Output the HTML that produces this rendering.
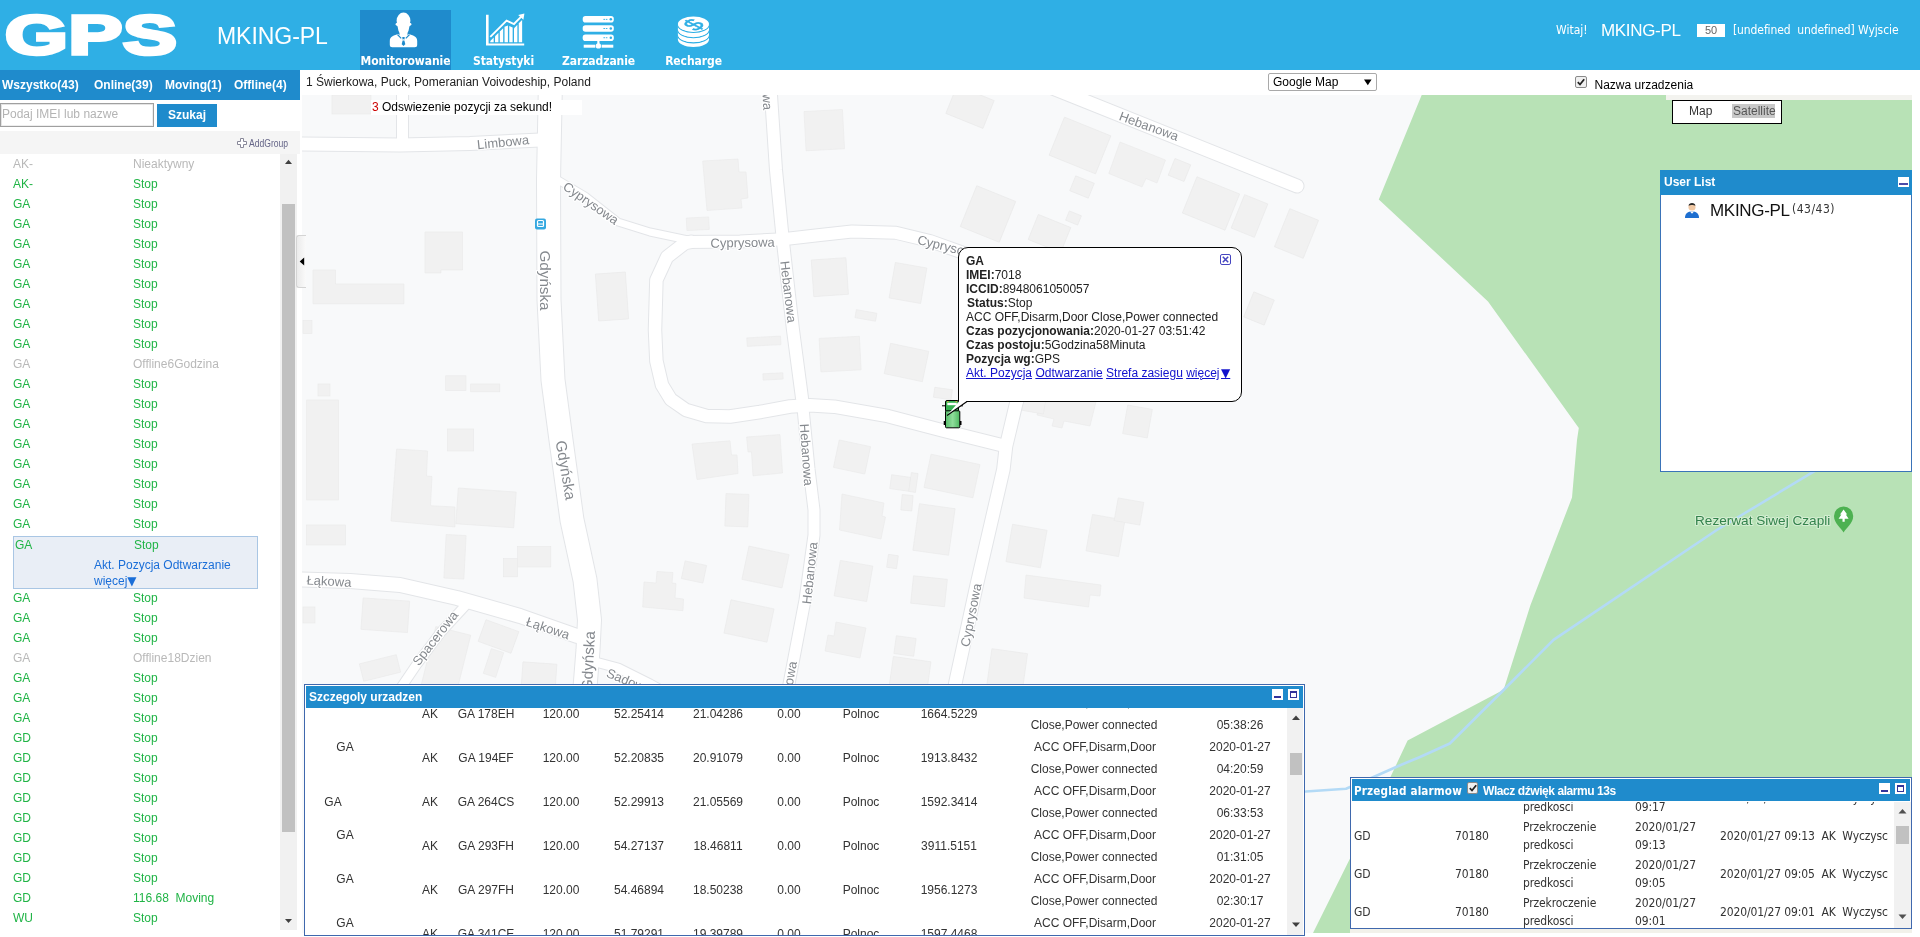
<!DOCTYPE html><html><head><meta charset="utf-8"><title>GPS</title><style>
*{box-sizing:border-box;margin:0;padding:0}
html,body{width:1920px;height:937px;overflow:hidden;background:#fff}
body{font-family:"Liberation Sans",sans-serif;font-size:12px;color:#000;position:relative}
.abs{position:absolute}
.t{position:absolute;white-space:nowrap;line-height:1}
.tah{font-family:"DejaVu Sans Condensed","Liberation Sans",sans-serif}
#hdr{position:absolute;left:0;top:0;width:1920px;height:70px;background:#2fafe5}
#gps{position:absolute;left:5px;top:3px;font-weight:bold;font-size:56px;line-height:64px;color:#fff;transform-origin:0 0;transform:scaleX(1.44);letter-spacing:0.5px;white-space:nowrap;-webkit-text-stroke:3.5px #fff}
.nav{position:absolute;top:10px;height:60px;color:#fff;font-weight:bold;font-size:12px;font-family:"DejaVu Sans Condensed","Liberation Sans",sans-serif;letter-spacing:-0.08px}
.nav span{position:absolute;left:0;right:0;top:44px;text-align:center;line-height:15px;white-space:nowrap}
#ltabs{position:absolute;left:0;top:70px;width:300px;height:30px;background:#1f8bcc}
#ltabs span{position:absolute;top:8px;color:#fff;font-weight:bold;font-size:12px;line-height:14px;white-space:nowrap}
.row{position:absolute;left:0;width:280px;height:20px;line-height:20px;font-size:12px;color:#20b446;white-space:nowrap}
.row b{font-weight:normal;position:absolute;left:13px}
.row i{font-style:normal;position:absolute;left:133px}
.row.off{color:#b9b9b9}
.pt{position:absolute;background:#1f8bcc;color:#fff;font-weight:bold;font-size:12px;white-space:nowrap}
.cell{position:absolute;white-space:nowrap;text-align:center;color:#333;font-size:12px;line-height:14px;transform:translateX(-50%)}
.ac{position:absolute;white-space:nowrap;color:#333;font-size:12px;line-height:14px}
</style></head><body><div id="app" style="position:absolute;left:0;top:0;width:1920px;height:937px;will-change:transform">
<svg class="abs" style="left:302px;top:95px" width="1610" height="838" viewBox="302 95 1610 838" font-family="Liberation Sans, sans-serif">
<rect x="302" y="95" width="1610" height="838" fill="#f8f9fa"/>
<polygon points="1421.700,95 1378.800,199.400 1488,301.400 1578.800,428 1577,440 1572,497.600 1530.500,605 1503.600,689.700 1407.600,740.400 1390,778 1313,933 1912,933 1912,95" fill="#b8e2b6"/>
<rect x="1666" y="95" width="246" height="5" fill="#f3f3ef"/><rect x="1350" y="929" width="562" height="4" fill="#f2f1ea"/>
<polyline points="1912,415 1812,472.600 1716.800,530 1553.500,639.800 1503.600,690 1449.800,743.500 1420,757 1400.700,765 1374.700,776.500 1346,788.800 1305.800,791.500 1250,793" fill="none" stroke="#b3daf6" stroke-width="2.6" stroke-linejoin="round"/>
<g fill="#f1f1f1" stroke="#e9e9e9" stroke-width="0.6"><rect x="332" y="95" width="39" height="19"/><polygon points="425,232 462.5,232 462.5,270 441,270 441,273 425,273"/><polygon points="313,270 335.5,270 335.5,284 404,284 404,303.7 313,303.7"/><rect x="303" y="320.5" width="9" height="13"/><rect x="445.7" y="375.8" width="20.3" height="14.9"/><rect x="470.7" y="384" width="29.1" height="7.8"/><rect x="318" y="384" width="12" height="12"/><rect x="306.7" y="400" width="31.8" height="100"/><rect x="447.5" y="429" width="26.2" height="22"/><rect x="597" y="273" width="30" height="47" transform="rotate(-4 612 296.5)"/><polygon points="702.7,161 738,159 739,172 746,172 748,198 741,199 742,208 707,210.5"/><rect x="686.6" y="217.5" width="22.4" height="12.5" transform="rotate(-3 697.8 223.75)"/><rect x="805" y="110.5" width="38.5" height="39.3" transform="rotate(-3 824.25 130.15)"/><rect x="812.5" y="258.8" width="34.7" height="36.7" transform="rotate(-4 829.85 277.15)"/><rect x="892" y="265" width="32" height="36" transform="rotate(10 908 283)"/><rect x="855.5" y="311.4" width="20.9" height="8.1" transform="rotate(10 865.95 315.45)"/><rect x="747" y="337" width="33.8" height="8.5" transform="rotate(-3 763.9 341.25)"/><rect x="763" y="373.3" width="20" height="6.3" transform="rotate(-3 773 376.45)"/><rect x="820" y="337.3" width="40.3" height="33.6" transform="rotate(-3 840.15 354.1)"/><rect x="887" y="347" width="39" height="31" transform="rotate(12 906.5 362.5)"/><rect x="934" y="388.5" width="17.8" height="10" transform="rotate(8 942.9 393.5)"/><rect x="950" y="92" width="40" height="30" transform="rotate(22 970 107)"/><polygon points="396.6,449 427.6,451 426.5,476 432,476.5 430.5,505.7 455,507 455,527 391,521"/><rect x="457" y="490" width="58" height="35.8" transform="rotate(4 486 507.9)"/><rect x="306.5" y="525" width="39.1" height="20"/><rect x="445" y="535" width="20" height="43.6" transform="rotate(3 455 556.8)"/><rect x="517.6" y="546.5" width="33.2" height="20.5"/><rect x="503.4" y="558.6" width="14.2" height="18.2"/><rect x="362" y="599.5" width="46.6" height="31.5" transform="rotate(4 385.3 615.25)"/><rect x="303" y="607" width="12" height="16"/><rect x="361" y="659" width="38" height="18" transform="rotate(-14 380 668)"/><rect x="428" y="630" width="36" height="60" transform="rotate(14 446 660)"/><rect x="481" y="625" width="35" height="23" transform="rotate(20 498.5 636.5)"/><rect x="487" y="650" width="13" height="26" transform="rotate(18 493.5 663)"/><rect x="522" y="663" width="34" height="27" transform="rotate(4 539 676.5)"/><polygon points="692,444 730,440.8 731.5,455 737,455 738,473.5 697,479.5"/><polygon points="746.6,437 780,434.6 782.5,473 753,475.8 751.5,452 748,452"/><rect x="725.4" y="494" width="23" height="32.5" transform="rotate(2 736.9 510.25)"/><rect x="745" y="550" width="41" height="34" transform="rotate(12 765.5 567)"/><rect x="683" y="563" width="22" height="18" transform="rotate(12 694 572)"/><polygon points="657,571.5 673,572.5 672,583 676,583.5 675,598 683.5,599 683,610.7 642.7,607 644,582 656,583"/><rect x="727" y="604" width="44" height="34" transform="rotate(12 749 621)"/><rect x="836" y="443" width="32" height="28" transform="rotate(12 852 457)"/><polygon points="842,494 884,503 882,516 885.5,517 881,539 839.5,530"/><rect x="890.6" y="476" width="19.4" height="14" transform="rotate(8 900.3 483)"/><rect x="910" y="473" width="6.8" height="19" transform="rotate(8 913.4 482.5)"/><rect x="901.5" y="495" width="11" height="15.5" transform="rotate(5 907 502.75)"/><rect x="927" y="459" width="50" height="34" transform="rotate(12 952 476)"/><rect x="916" y="506" width="36" height="47" transform="rotate(8 934 529.5)"/><rect x="837" y="563" width="33" height="36" transform="rotate(10 853.5 581)"/><rect x="887.5" y="555" width="10" height="13" transform="rotate(8 892.5 561.5)"/><rect x="912" y="577.5" width="34" height="27.5" transform="rotate(6 929 591.25)"/><polygon points="836,622 866,628 860,658 825,651 828,635 834,636"/><rect x="895" y="637" width="20" height="18" transform="rotate(8 905 646)"/><rect x="891" y="659" width="38" height="31" transform="rotate(8 910 674.5)"/><rect x="989" y="651" width="36" height="39" transform="rotate(8 1007 670.5)"/><rect x="1055" y="125" width="50" height="41" transform="rotate(22 1080 145.5)"/><polygon points="1120,142 1165.5,160 1157,183 1146,178.5 1142,187 1108.8,173.5"/><rect x="1171" y="161" width="17" height="18" transform="rotate(22 1179.5 170)"/><rect x="1072" y="179" width="20" height="16" transform="rotate(22 1082 187)"/><rect x="1188" y="184" width="46" height="39" transform="rotate(22 1211 203.5)"/><rect x="1237" y="198" width="25" height="36" transform="rotate(22 1249.5 216)"/><rect x="1281" y="213" width="31" height="41" transform="rotate(22 1296.5 233.5)"/><rect x="967" y="192" width="42" height="44" transform="rotate(22 988 214)"/><rect x="1032" y="220" width="35" height="27" transform="rotate(22 1049.5 233.5)"/><rect x="1067" y="213" width="13" height="10" transform="rotate(22 1073.5 218)"/><rect x="1248" y="295" width="22" height="27" transform="rotate(22 1259 308.5)"/><polygon points="1040,402 1096,402 1090,426 1064,421 1062,428 1052,426 1054,419 1037,415"/><rect x="1125" y="407" width="25" height="29" transform="rotate(10 1137.5 421.5)"/><rect x="1009" y="527" width="35" height="38" transform="rotate(10 1026.5 546)"/><rect x="1089" y="517" width="33" height="37" transform="rotate(10 1105.5 535.5)"/><rect x="1116" y="500" width="26" height="23" transform="rotate(10 1129 511.5)"/><polygon points="1026,575 1101,585 1100,596 1090,595 1088.5,607 1024,598"/><rect x="1020" y="395" width="25" height="17" transform="rotate(10 1032.5 403.5)"/></g>
<polyline points="550.5,80 548.5,180 549,300 553,380 561,440 572,520 585,580 589.5,620 588,650 584,700" fill="none" stroke="#e3e5e8" stroke-width="25" stroke-linecap="round" stroke-linejoin="round"/>
<polyline points="290,144 400,145 470,143.5 540,140" fill="none" stroke="#e3e5e8" stroke-width="15" stroke-linecap="round" stroke-linejoin="round"/>
<polyline points="402.5,80 402.5,143" fill="none" stroke="#e3e5e8" stroke-width="13" stroke-linecap="round" stroke-linejoin="round"/>
<polyline points="558,180 585,196 618,222 650,232 688,240" fill="none" stroke="#e3e5e8" stroke-width="9" stroke-linecap="round" stroke-linejoin="round"/>
<polyline points="686,242 740,241.5 783,239.2 820,235 852,231.5 896,232.8 930,241 957,250.7 1000,266" fill="none" stroke="#e3e5e8" stroke-width="14" stroke-linecap="round" stroke-linejoin="round"/>
<polyline points="691,241.8 685,243 667,257 656.4,280 655,330 656.4,361 662,385 670.7,399.3 686,410 706.6,416 730,416.5 760,412 790,406.5 809.8,405.3 834.2,406.7 888.3,416.2 943.8,430.8 1003,445.5" fill="none" stroke="#e3e5e8" stroke-width="14.5" stroke-linecap="round" stroke-linejoin="round"/>
<polyline points="770,80 776,170 783.4,245.6 793,330 802,398" fill="none" stroke="#e3e5e8" stroke-width="14" stroke-linecap="round" stroke-linejoin="round"/>
<polyline points="802,398 809,469 814,510 814,535 805,600 789,684 786,700" fill="none" stroke="#e3e5e8" stroke-width="13" stroke-linecap="round" stroke-linejoin="round"/>
<polyline points="1030,360 1016.3,403 1006,446.4 1003.4,469.4 976.5,585.8 956.3,678.6 951,705" fill="none" stroke="#e3e5e8" stroke-width="14.5" stroke-linecap="round" stroke-linejoin="round"/>
<polyline points="1045,85 1070,95 1297,186" fill="none" stroke="#e3e5e8" stroke-width="15" stroke-linecap="round" stroke-linejoin="round"/>
<polyline points="290,579 350,581 400,585 457,598 520,616 577,636" fill="none" stroke="#e3e5e8" stroke-width="16" stroke-linecap="round" stroke-linejoin="round"/>
<polyline points="465,606 441,632 417,664 398,692" fill="none" stroke="#e3e5e8" stroke-width="11" stroke-linecap="round" stroke-linejoin="round"/>
<polyline points="588,660 618,668 650,684 670,695" fill="none" stroke="#e3e5e8" stroke-width="11" stroke-linecap="round" stroke-linejoin="round"/>
<polyline points="550.5,80 548.5,180 549,300 553,380 561,440 572,520 585,580 589.5,620 588,650 584,700" fill="none" stroke="#fff" stroke-width="23" stroke-linecap="round" stroke-linejoin="round"/>
<polyline points="290,144 400,145 470,143.5 540,140" fill="none" stroke="#fff" stroke-width="13" stroke-linecap="round" stroke-linejoin="round"/>
<polyline points="402.5,80 402.5,143" fill="none" stroke="#fff" stroke-width="11" stroke-linecap="round" stroke-linejoin="round"/>
<polyline points="558,180 585,196 618,222 650,232 688,240" fill="none" stroke="#fff" stroke-width="7" stroke-linecap="round" stroke-linejoin="round"/>
<polyline points="686,242 740,241.5 783,239.2 820,235 852,231.5 896,232.8 930,241 957,250.7 1000,266" fill="none" stroke="#fff" stroke-width="12" stroke-linecap="round" stroke-linejoin="round"/>
<polyline points="691,241.8 685,243 667,257 656.4,280 655,330 656.4,361 662,385 670.7,399.3 686,410 706.6,416 730,416.5 760,412 790,406.5 809.8,405.3 834.2,406.7 888.3,416.2 943.8,430.8 1003,445.5" fill="none" stroke="#fff" stroke-width="12.5" stroke-linecap="round" stroke-linejoin="round"/>
<polyline points="770,80 776,170 783.4,245.6 793,330 802,398" fill="none" stroke="#fff" stroke-width="12" stroke-linecap="round" stroke-linejoin="round"/>
<polyline points="802,398 809,469 814,510 814,535 805,600 789,684 786,700" fill="none" stroke="#fff" stroke-width="11" stroke-linecap="round" stroke-linejoin="round"/>
<polyline points="1030,360 1016.3,403 1006,446.4 1003.4,469.4 976.5,585.8 956.3,678.6 951,705" fill="none" stroke="#fff" stroke-width="12.5" stroke-linecap="round" stroke-linejoin="round"/>
<polyline points="1045,85 1070,95 1297,186" fill="none" stroke="#fff" stroke-width="13" stroke-linecap="round" stroke-linejoin="round"/>
<polyline points="290,579 350,581 400,585 457,598 520,616 577,636" fill="none" stroke="#fff" stroke-width="14" stroke-linecap="round" stroke-linejoin="round"/>
<polyline points="465,606 441,632 417,664 398,692" fill="none" stroke="#fff" stroke-width="9" stroke-linecap="round" stroke-linejoin="round"/>
<polyline points="588,660 618,668 650,684 670,695" fill="none" stroke="#fff" stroke-width="9" stroke-linecap="round" stroke-linejoin="round"/>
<text x="503" y="146.68" font-size="13" fill="#85898e" text-anchor="middle" transform="rotate(-6 503 142)" stroke="#fff" stroke-width="2.5" paint-order="stroke" stroke-linejoin="round">Limbowa</text>
<text x="591" y="207.68" font-size="13" fill="#85898e" text-anchor="middle" transform="rotate(35 591 203)" stroke="#fff" stroke-width="2.5" paint-order="stroke" stroke-linejoin="round">Cyprysowa</text>
<text x="742.6" y="247.08" font-size="13" fill="#85898e" text-anchor="middle" transform="rotate(-1 742.6 242.4)" stroke="#fff" stroke-width="2.5" paint-order="stroke" stroke-linejoin="round">Cyprysowa</text>
<text x="949" y="251.68" font-size="13" fill="#85898e" text-anchor="middle" transform="rotate(14 949 247)" stroke="#fff" stroke-width="2.5" paint-order="stroke" stroke-linejoin="round">Cyprysowa</text>
<text x="545.8" y="285.972" font-size="15.2" fill="#85898e" text-anchor="middle" transform="rotate(90 545.8 280.5)" stroke="#fff" stroke-width="2.5" paint-order="stroke" stroke-linejoin="round">Gdyńska</text>
<text x="788.6" y="296.38" font-size="13" fill="#85898e" text-anchor="middle" transform="rotate(83 788.6 291.7)" stroke="#fff" stroke-width="2.5" paint-order="stroke" stroke-linejoin="round">Hebanowa</text>
<text x="766.5" y="83.68" font-size="13" fill="#85898e" text-anchor="middle" transform="rotate(87 766.5 79)" stroke="#fff" stroke-width="2.5" paint-order="stroke" stroke-linejoin="round">Hebanowa</text>
<text x="1149" y="130.68" font-size="13" fill="#85898e" text-anchor="middle" transform="rotate(20 1149 126)" stroke="#fff" stroke-width="2.5" paint-order="stroke" stroke-linejoin="round">Hebanowa</text>
<text x="566" y="475.472" font-size="15.2" fill="#85898e" text-anchor="middle" transform="rotate(80 566 470)" stroke="#fff" stroke-width="2.5" paint-order="stroke" stroke-linejoin="round">Gdyńska</text>
<text x="806.7" y="459.38" font-size="13" fill="#85898e" text-anchor="middle" transform="rotate(86 806.7 454.7)" stroke="#fff" stroke-width="2.5" paint-order="stroke" stroke-linejoin="round">Hebanowa</text>
<text x="809.7" y="577.68" font-size="13" fill="#85898e" text-anchor="middle" transform="rotate(-84 809.7 573)" stroke="#fff" stroke-width="2.5" paint-order="stroke" stroke-linejoin="round">Hebanowa</text>
<text x="970.8" y="619.68" font-size="13" fill="#85898e" text-anchor="middle" transform="rotate(-79 970.8 615)" stroke="#fff" stroke-width="2.5" paint-order="stroke" stroke-linejoin="round">Cyprysowa</text>
<text x="329" y="585.68" font-size="13" fill="#85898e" text-anchor="middle" transform="rotate(3 329 581)" stroke="#fff" stroke-width="2.5" paint-order="stroke" stroke-linejoin="round">Łąkowa</text>
<text x="548" y="632.68" font-size="13" fill="#85898e" text-anchor="middle" transform="rotate(18 548 628)" stroke="#fff" stroke-width="2.5" paint-order="stroke" stroke-linejoin="round">Łąkowa</text>
<text x="435" y="642.68" font-size="13" fill="#85898e" text-anchor="middle" transform="rotate(-52 435 638)" stroke="#fff" stroke-width="2.5" paint-order="stroke" stroke-linejoin="round">Spacerowa</text>
<text x="588" y="666.472" font-size="15.2" fill="#85898e" text-anchor="middle" transform="rotate(-87 588 661)" stroke="#fff" stroke-width="2.5" paint-order="stroke" stroke-linejoin="round">Gdyńska</text>
<text x="629" y="685.68" font-size="13" fill="#85898e" text-anchor="middle" transform="rotate(22 629 681)" stroke="#fff" stroke-width="2.5" paint-order="stroke" stroke-linejoin="round">Sadowa</text>
<text x="787" y="696.68" font-size="13" fill="#85898e" text-anchor="middle" transform="rotate(-80 787 692)" stroke="#fff" stroke-width="2.5" paint-order="stroke" stroke-linejoin="round">Hebanowa</text>
<rect x="535" y="218.500" width="11" height="11" rx="2" fill="#35a8e0"/><rect x="537.500" y="220.500" width="6" height="6" rx="1" fill="none" stroke="#fff" stroke-width="1.2"/><rect x="538" y="223.500" width="5" height="1" fill="#fff"/>
<text x="1695" y="525" font-size="13.600" fill="#33824c" stroke="#d4eed2" stroke-width="2.200" paint-order="stroke" stroke-linejoin="round">Rezerwat Siwej Czapli</text>
<path d="M1843.600 532.600c-2.500-5-9.600-9-9.600-16.600a9.600 9.600 0 0 1 19.200 0c0 7.600-7.100 11.600-9.600 16.600z" fill="#4db151"/><path d="M1843.600 509.500l-3.600 5h1.400l-2.800 4.300h3.900v3h2.200v-3h3.900l-2.800-4.300h1.400z" fill="#fff"/>
<defs><linearGradient id="cg" x1="0" y1="0" x2="1" y2="0"><stop offset="0" stop-color="#55bd69"/><stop offset="0.5" stop-color="#8fdc9b"/><stop offset="1" stop-color="#4cb860"/></linearGradient></defs>
<g stroke="#000" stroke-width="1"><path d="M942 405.800h4M958.500 405.800h4.500" fill="none"/><rect x="943.700" y="421" width="2" height="4" fill="#000" stroke="none"/><rect x="959.500" y="421" width="2" height="4" fill="#000" stroke="none"/><rect x="945.500" y="400.500" width="13" height="11" rx="1.500" fill="#36b152"/><rect x="945.500" y="410.800" width="14.300" height="17" rx="1" fill="url(#cg)"/></g><rect x="947.300" y="402.800" width="9.500" height="2.400" fill="#fff"/><rect x="947" y="401.200" width="1.600" height="1" fill="#e8b040"/><rect x="955.500" y="401.200" width="1.600" height="1" fill="#e8b040"/>
</svg>
<div id="hdr">
<div id="gps">GPS</div>
<div class="t" style="left:217px;top:25px;font-size:23px;color:#fff;letter-spacing:-0.05px">MKING-PL</div>
<div class="nav" style="left:360px;width:91px;background:#1f8bcc"><span>Monitorowanie</span></div>
<div class="nav" style="left:458px;width:91px"><span>Statystyki</span></div>
<div class="nav" style="left:553px;width:91px"><span>Zarzadzanie</span></div>
<div class="nav" style="left:648px;width:91px"><span>Recharge</span></div>
<svg class="abs" style="left:360px;top:0" width="380" height="70" viewBox="360 0 380 70">
<g fill="#fff">
<ellipse cx="403.500" cy="20.800" rx="6.900" ry="8.200"/><ellipse cx="403.500" cy="24.300" rx="8.100" ry="2.600"/>
<path d="M397.300 25h12.400l-1.100 5.600-1.100 2.500v4h-8v-4l-1.100-2.500z"/>
<path d="M398.300 34.100l5.200 4.500 5.200-4.500c4 1.400 8.500 2.400 8.500 6.900v3.700q0 2.500-2.500 2.500h-22.400q-2.500 0-2.500-2.500v-3.700c0-4.500 4.500-5.500 8.500-6.900z"/>
</g>
<g fill="#1f8bcc"><path d="M398 34.300l3.600 3.600-0.800 0.800-3.800-3.800zM409 34.300l-3.600 3.600 0.800 0.800 3.800-3.800z"/><path d="M403.500 37l1.600 2.300h-3.200z"/><path d="M402.600 40.600h1.800l0.900 3.600-1.800 1.800-1.800-1.800z"/></g>
<g fill="#fff">
<path d="M486 14.800h2.600v28.800h35.600v2h-38.200z"/>
<path d="M490.3 36.8 L506.6 20.6 L514 24 L522 15.8" fill="none" stroke="#fff" stroke-width="1.900" stroke-linejoin="miter"/>
<path d="M524.400 13.600l-1 6.200-5.200-4.700z"/>
<path d="M490.3 42.200V40.92L493.7 37.56V42.200z"/>
<path d="M495.04 42.200V36.24L498.44 32.87V42.200z"/>
<path d="M499.78 42.200V31.55L503.18 28.18V42.200z"/>
<path d="M504.52 42.200V26.86L507.92 25.41V42.200z"/>
<path d="M509.26 42.200V26.02L512.66 27.58V42.200z"/>
<path d="M514 42.200V28.2L517.4 24.73V42.200z"/>
<path d="M518.74 42.200V23.37L522.14 19.9V42.200z"/>
<rect x="582.700" y="16.1" width="31.100" height="6.500" rx="2.800"/>
<rect x="582.700" y="25.3" width="31.100" height="6.500" rx="2.800"/>
<rect x="582.700" y="34.5" width="31.100" height="6.500" rx="2.800"/>
<rect x="597.300" y="40.500" width="2.200" height="4"/><circle cx="598.400" cy="45.900" r="2.700"/>
<rect x="583.700" y="44.700" width="11.600" height="3"/><rect x="601.600" y="44.700" width="11.700" height="3"/>
<g fill="#2fafe5">
<circle cx="610.800" cy="19.35" r="1.250"/><rect x="603.400" y="18.9" width="1.600" height="0.900"/><rect x="605.800" y="18.9" width="1.600" height="0.900"/>
<circle cx="610.800" cy="28.55" r="1.250"/><rect x="603.400" y="28.1" width="1.600" height="0.900"/><rect x="605.800" y="28.1" width="1.600" height="0.900"/>
<circle cx="610.800" cy="37.75" r="1.250"/><rect x="603.400" y="37.3" width="1.600" height="0.900"/><rect x="605.800" y="37.3" width="1.600" height="0.900"/>
</g>
<path d="M677.900 35.4v4.200c0 4.100 7 7.500 15.500 7.500s15.600-3.400 15.600-7.500v-4.200z"/>
<path d="M677.900 35.4c0 4.100 7 7.500 15.500 7.500s15.600-3.400 15.600-7.500" fill="none" stroke="#2fafe5" stroke-width="1.100"/>
<path d="M677.900 30.2v4.200c0 4.100 7 7.500 15.500 7.500s15.600-3.400 15.600-7.500v-4.200z"/>
<path d="M677.900 30.2c0 4.100 7 7.500 15.500 7.500s15.600-3.400 15.600-7.500" fill="none" stroke="#2fafe5" stroke-width="1.100"/>
<path d="M677.900 25v4.200c0 4.100 7 7.500 15.500 7.500s15.600-3.400 15.600-7.500v-4.200z"/>
<path d="M677.900 25c0 4.100 7 7.500 15.500 7.500s15.600-3.400 15.600-7.500" fill="none" stroke="#2fafe5" stroke-width="1.100"/>
<ellipse cx="693.450" cy="24" rx="15.550" ry="7.500"/>
</g>
<text x="0" y="0" font-size="27" font-weight="normal" stroke="#2fafe5" stroke-width="0.6" fill="#2fafe5" text-anchor="middle" font-family="Liberation Sans, sans-serif" transform="translate(693.600 24.600) scale(1 0.62) rotate(-50) translate(0 9.500)">$</text>
</svg>
<div class="t tah" style="left:1556px;top:24px;font-size:12px;color:#fff">Witaj!</div>
<div class="t" style="left:1601px;top:22px;font-size:17px;color:#fff;letter-spacing:-0.33px">MKING-PL</div>
<div class="abs" style="left:1697px;top:24px;width:28px;height:13px;background:#fff;color:#666;font-size:11px;line-height:13px;padding-left:8px">50</div>
<div class="t tah" style="left:1733px;top:24px;font-size:12px;color:#fff;letter-spacing:-0.1px">[undefined&nbsp; undefined] Wyjscie</div>
</div>
<div class="abs" style="left:0;top:70px;width:300px;height:867px;background:#fff"></div>
<div id="ltabs"><span style="left:2px">Wszystko(43)</span><span style="left:94px">Online(39)</span><span style="left:165px">Moving(1)</span><span style="left:234px">Offline(4)</span></div>
<div class="abs" style="left:0;top:103px;width:154px;height:24px;border:1px solid #a0a0a0;box-shadow:inset 1px 1px 0 #e4e4e4,inset -1px -1px 0 #eee;background:#fff;color:#b4b4b4;font-size:12px;line-height:21px;padding-left:1px;white-space:nowrap">Podaj IMEI lub nazwe</div>
<div class="abs" style="left:157px;top:104px;width:60px;height:23px;background:#1f8bcc;color:#fff;font-weight:bold;font-size:12px;line-height:22px;text-align:center">Szukaj</div>
<div class="abs" style="left:0;top:131px;width:300px;height:23px;background:#f5f5f5"></div>
<svg class="abs" style="left:237px;top:138px" width="10" height="10" viewBox="0 0 10 10"><path d="M3.5 0.5h3v3h3v3h-3v3h-3v-3h-3v-3h3z" fill="#fff" stroke="#889" stroke-width="1"/></svg>
<div class="t" style="left:249px;top:138px;font-size:11px;color:#668;transform-origin:0 0;transform:scaleX(0.78)">AddGroup</div>
<div class="row off" style="top:154px"><b>AK-</b><i>Nieaktywny</i></div>
<div class="row" style="top:174px"><b>AK-</b><i>Stop</i></div>
<div class="row" style="top:194px"><b>GA</b><i>Stop</i></div>
<div class="row" style="top:214px"><b>GA</b><i>Stop</i></div>
<div class="row" style="top:234px"><b>GA</b><i>Stop</i></div>
<div class="row" style="top:254px"><b>GA</b><i>Stop</i></div>
<div class="row" style="top:274px"><b>GA</b><i>Stop</i></div>
<div class="row" style="top:294px"><b>GA</b><i>Stop</i></div>
<div class="row" style="top:314px"><b>GA</b><i>Stop</i></div>
<div class="row" style="top:334px"><b>GA</b><i>Stop</i></div>
<div class="row off" style="top:354px"><b>GA</b><i>Offline6Godzina</i></div>
<div class="row" style="top:374px"><b>GA</b><i>Stop</i></div>
<div class="row" style="top:394px"><b>GA</b><i>Stop</i></div>
<div class="row" style="top:414px"><b>GA</b><i>Stop</i></div>
<div class="row" style="top:434px"><b>GA</b><i>Stop</i></div>
<div class="row" style="top:454px"><b>GA</b><i>Stop</i></div>
<div class="row" style="top:474px"><b>GA</b><i>Stop</i></div>
<div class="row" style="top:494px"><b>GA</b><i>Stop</i></div>
<div class="row" style="top:514px"><b>GA</b><i>Stop</i></div>
<div class="abs" style="left:13px;top:536px;width:245px;height:53px;background:#e9eef6;border:1px solid #a9c6e4"></div>
<div class="row" style="top:535px"><b style="left:15px">GA</b><i style="left:134px">Stop</i></div>
<div class="t" style="left:94px;top:559px;font-size:12px;color:#1a6ed8">Akt. Pozycja Odtwarzanie</div>
<div class="t" style="left:94px;top:575px;font-size:12px;color:#1a6ed8">więcej<span style="font-family:DejaVu Sans,sans-serif">▼</span></div>
<div class="row" style="top:588px"><b>GA</b><i>Stop</i></div>
<div class="row" style="top:608px"><b>GA</b><i>Stop</i></div>
<div class="row" style="top:628px"><b>GA</b><i>Stop</i></div>
<div class="row off" style="top:648px"><b>GA</b><i>Offline18Dzien</i></div>
<div class="row" style="top:668px"><b>GA</b><i>Stop</i></div>
<div class="row" style="top:688px"><b>GA</b><i>Stop</i></div>
<div class="row" style="top:708px"><b>GA</b><i>Stop</i></div>
<div class="row" style="top:728px"><b>GD</b><i>Stop</i></div>
<div class="row" style="top:748px"><b>GD</b><i>Stop</i></div>
<div class="row" style="top:768px"><b>GD</b><i>Stop</i></div>
<div class="row" style="top:788px"><b>GD</b><i>Stop</i></div>
<div class="row" style="top:808px"><b>GD</b><i>Stop</i></div>
<div class="row" style="top:828px"><b>GD</b><i>Stop</i></div>
<div class="row" style="top:848px"><b>GD</b><i>Stop</i></div>
<div class="row" style="top:868px"><b>GD</b><i>Stop</i></div>
<div class="row" style="top:888px"><b>GD</b><i>116.68&nbsp; Moving</i></div>
<div class="row" style="top:908px"><b>WU</b><i>Stop</i></div>
<div class="abs" style="left:280px;top:154px;width:17px;height:776px;background:#f1f1f1"></div>
<div class="abs" style="left:282px;top:204px;width:13px;height:628px;background:#c1c1c1"></div>
<svg class="abs" style="left:280px;top:154px" width="17" height="776"><path d="M5 10l3.500-4.300 3.500 4.300z" fill="#404040"/><path d="M5 765l3.500 4 3.500-4z" fill="#404040"/></svg>
<div class="abs" style="left:296px;top:235px;width:10px;height:53px;background:linear-gradient(to right,#ebebeb,#fafafa);border:1px solid #d4d4d4;border-right:none;border-radius:3px 0 0 3px"></div>
<svg class="abs" style="left:299px;top:257px" width="6" height="10"><path d="M5.200 0.600v7.800l-4.500-3.900z" fill="#000"/></svg>
<div class="abs" style="left:300px;top:70px;width:1620px;height:25px;background:#fff"></div>
<div class="t" style="left:306px;top:76px;font-size:12px;color:#222">1 Świerkowa, Puck, Pomeranian Voivodeship, Poland</div>
<div class="abs" style="left:1268px;top:73px;width:109px;height:18px;border:1px solid #a9a9a9;background:#fff;font-size:12px;line-height:16px;padding-left:4px;white-space:nowrap;border-radius:2px">Google Map</div><svg class="abs" style="left:1364px;top:79px" width="8" height="7"><path d="M0 0.500h7.600l-3.800 5.800z" fill="#000"/></svg>
<div class="abs" style="left:1575px;top:76px;width:12px;height:12px;border:1px solid #8a8a8a;border-radius:2px;background:#f0f0f0"></div>
<svg class="abs" style="left:1575px;top:76px" width="12" height="12"><path d="M2.8 6.2l2.2 2.3 4.2-5.3" fill="none" stroke="#222" stroke-width="1.8"/></svg>
<div class="t" style="left:1594.500px;top:79px;font-size:12px">Nazwa urzadzenia</div>
<div class="abs" style="left:371px;top:100px;width:211px;height:15px;background:#fff"></div>
<div class="t" style="left:372px;top:101px;font-size:12px"><span style="color:#c00">3</span> Odswiezenie pozycji za sekund!</div>
<div class="abs" style="left:1672px;top:100px;width:110px;height:24px;background:#fff;border:1px solid #000"></div>
<div class="t" style="left:1689px;top:105px;font-size:12px;color:#333">Map</div>
<div class="abs" style="left:1732px;top:104px;width:43px;height:14px;background:#c8c8c8"></div>
<div class="t" style="left:1733px;top:105px;font-size:12px;color:#555">Satellite</div>
<div class="abs" style="left:1660px;top:170px;width:252px;height:302px;background:#fff;border:1px solid #3a73b8"></div>
<div class="pt" style="left:1660px;top:170px;width:252px;height:25px;line-height:24px;padding-left:4px;font-size:12px">User List</div>
<div class="abs" style="left:1898px;top:177px;width:11px;height:10px;background:#fff"></div><div class="abs" style="left:1899px;top:183px;width:9px;height:2px;background:#4b4ba8"></div>
<svg class="abs" style="left:1684px;top:202px" width="16" height="17" viewBox="0 0 16 17"><circle cx="8" cy="5" r="3.6" fill="#f1c9a5"/><path d="M4.6 3.8c0-3.6 6.8-3.6 6.8 0-1.5-1-5.3-1-6.8 0z" fill="#2b2b2b"/><path d="M1 16c0-5 3-6.5 7-6.5s7 1.500 7 6.500z" fill="#1e6fd0"/><path d="M6 9.600l2 2.200 2-2.200z" fill="#fff"/></svg>
<div class="t" style="left:1710px;top:202px;font-size:17px;color:#111;letter-spacing:-0.3px">MKING-PL</div>
<div class="t tah" style="left:1792px;top:203px;font-size:12px;color:#333;letter-spacing:0.5px">(43/43)</div>
<div class="abs" style="left:958px;top:247px;width:284px;height:155px;background:#fff;border:1px solid #000;border-radius:10px 10px 10px 0"></div>
<svg class="abs" style="left:940px;top:396px" width="40" height="24" viewBox="940 396 40 24"><path d="M959 399v2.500L947 415.500 966.800 402h-0.500v-1z" fill="#fff"/><path d="M967 401.500L947 415.500" fill="none" stroke="#000" stroke-width="1.100"/></svg>
<div class="abs" style="left:966px;top:254px;font-size:12px;line-height:14px;color:#222;white-space:nowrap">
<b>GA</b><br><b>IMEI:</b>7018<br><b>ICCID:</b>8948061050057<br><b style="margin-left:1px">Status:</b>Stop<br>ACC OFF,Disarm,Door Close,Power connected<br><b>Czas pozycjonowania:</b>2020-01-27 03:51:42<br><b>Czas postoju:</b>5Godzina58Minuta<br><b>Pozycja wg:</b>GPS<br><span style="color:#1111cc"><u>Akt. Pozycja</u> <u>Odtwarzanie</u> <u>Strefa zasiegu</u> <u>więcej<span style="font-family:DejaVu Sans,sans-serif;padding-left:1.500px">▼</span></u></span>
</div>
<svg class="abs" style="left:1220px;top:254px" width="12" height="12"><rect x="0.500" y="0.500" width="10" height="10" rx="1.500" fill="#fff" stroke="#4646c0"/><path d="M2.800 2.800l5.400 5.400M8.200 2.800l-5.400 5.400" stroke="#4646c0" stroke-width="1.500"/></svg>

<div class="abs" style="left:304px;top:684px;width:1001px;height:252px;background:#fff;border:1px solid #3f68ad;overflow:hidden"></div>
<div class="abs" style="left:305px;top:707px;width:999px;height:228px;overflow:hidden">
<div class="cell" style="left:40px;top:-55px">GA</div>
<div class="cell" style="left:125px;top:-44px">AK</div>
<div class="cell" style="left:181px;top:-44px">GA 174EH</div>
<div class="cell" style="left:256px;top:-44px">120.00</div>
<div class="cell" style="left:334px;top:-44px">52.25000</div>
<div class="cell" style="left:413px;top:-44px">21.04000</div>
<div class="cell" style="left:484px;top:-44px">0.00</div>
<div class="cell" style="left:556px;top:-44px">Polnoc</div>
<div class="cell" style="left:644px;top:-44px">1600.0000</div>
<div class="cell" style="left:790px;top:-55px">ACC OFF,Disarm,Door</div>
<div class="cell" style="left:789px;top:-33px">Close,Power connected</div>
<div class="cell" style="left:935px;top:-55px">2020-01-27</div>
<div class="cell" style="left:935px;top:-33px">05:38:26</div>
<div class="cell" style="left:40px;top:-11px">GA</div>
<div class="cell" style="left:125px;top:0px">AK</div>
<div class="cell" style="left:181px;top:0px">GA 178EH</div>
<div class="cell" style="left:256px;top:0px">120.00</div>
<div class="cell" style="left:334px;top:0px">52.25414</div>
<div class="cell" style="left:413px;top:0px">21.04286</div>
<div class="cell" style="left:484px;top:0px">0.00</div>
<div class="cell" style="left:556px;top:0px">Polnoc</div>
<div class="cell" style="left:644px;top:0px">1664.5229</div>
<div class="cell" style="left:790px;top:-11px">ACC OFF,Disarm,Door</div>
<div class="cell" style="left:789px;top:11px">Close,Power connected</div>
<div class="cell" style="left:935px;top:-11px">2020-01-27</div>
<div class="cell" style="left:935px;top:11px">05:38:26</div>
<div class="cell" style="left:40px;top:33px">GA</div>
<div class="cell" style="left:125px;top:44px">AK</div>
<div class="cell" style="left:181px;top:44px">GA 194EF</div>
<div class="cell" style="left:256px;top:44px">120.00</div>
<div class="cell" style="left:334px;top:44px">52.20835</div>
<div class="cell" style="left:413px;top:44px">20.91079</div>
<div class="cell" style="left:484px;top:44px">0.00</div>
<div class="cell" style="left:556px;top:44px">Polnoc</div>
<div class="cell" style="left:644px;top:44px">1913.8432</div>
<div class="cell" style="left:790px;top:33px">ACC OFF,Disarm,Door</div>
<div class="cell" style="left:789px;top:55px">Close,Power connected</div>
<div class="cell" style="left:935px;top:33px">2020-01-27</div>
<div class="cell" style="left:935px;top:55px">04:20:59</div>
<div class="cell" style="left:28px;top:88px">GA</div>
<div class="cell" style="left:125px;top:88px">AK</div>
<div class="cell" style="left:181px;top:88px">GA 264CS</div>
<div class="cell" style="left:256px;top:88px">120.00</div>
<div class="cell" style="left:334px;top:88px">52.29913</div>
<div class="cell" style="left:413px;top:88px">21.05569</div>
<div class="cell" style="left:484px;top:88px">0.00</div>
<div class="cell" style="left:556px;top:88px">Polnoc</div>
<div class="cell" style="left:644px;top:88px">1592.3414</div>
<div class="cell" style="left:790px;top:77px">ACC OFF,Disarm,Door</div>
<div class="cell" style="left:789px;top:99px">Close,Power connected</div>
<div class="cell" style="left:935px;top:77px">2020-01-27</div>
<div class="cell" style="left:935px;top:99px">06:33:53</div>
<div class="cell" style="left:40px;top:121px">GA</div>
<div class="cell" style="left:125px;top:132px">AK</div>
<div class="cell" style="left:181px;top:132px">GA 293FH</div>
<div class="cell" style="left:256px;top:132px">120.00</div>
<div class="cell" style="left:334px;top:132px">54.27137</div>
<div class="cell" style="left:413px;top:132px">18.46811</div>
<div class="cell" style="left:484px;top:132px">0.00</div>
<div class="cell" style="left:556px;top:132px">Polnoc</div>
<div class="cell" style="left:644px;top:132px">3911.5151</div>
<div class="cell" style="left:790px;top:121px">ACC OFF,Disarm,Door</div>
<div class="cell" style="left:789px;top:143px">Close,Power connected</div>
<div class="cell" style="left:935px;top:121px">2020-01-27</div>
<div class="cell" style="left:935px;top:143px">01:31:05</div>
<div class="cell" style="left:40px;top:165px">GA</div>
<div class="cell" style="left:125px;top:176px">AK</div>
<div class="cell" style="left:181px;top:176px">GA 297FH</div>
<div class="cell" style="left:256px;top:176px">120.00</div>
<div class="cell" style="left:334px;top:176px">54.46894</div>
<div class="cell" style="left:413px;top:176px">18.50238</div>
<div class="cell" style="left:484px;top:176px">0.00</div>
<div class="cell" style="left:556px;top:176px">Polnoc</div>
<div class="cell" style="left:644px;top:176px">1956.1273</div>
<div class="cell" style="left:790px;top:165px">ACC OFF,Disarm,Door</div>
<div class="cell" style="left:789px;top:187px">Close,Power connected</div>
<div class="cell" style="left:935px;top:165px">2020-01-27</div>
<div class="cell" style="left:935px;top:187px">02:30:17</div>
<div class="cell" style="left:40px;top:209px">GA</div>
<div class="cell" style="left:125px;top:220px">AK</div>
<div class="cell" style="left:181px;top:220px">GA 341CE</div>
<div class="cell" style="left:256px;top:220px">120.00</div>
<div class="cell" style="left:334px;top:220px">51.79291</div>
<div class="cell" style="left:413px;top:220px">19.39789</div>
<div class="cell" style="left:484px;top:220px">0.00</div>
<div class="cell" style="left:556px;top:220px">Polnoc</div>
<div class="cell" style="left:644px;top:220px">1597.4468</div>
<div class="cell" style="left:790px;top:209px">ACC OFF,Disarm,Door</div>
<div class="cell" style="left:789px;top:231px">Close,Power connected</div>
<div class="cell" style="left:935px;top:209px">2020-01-27</div>
<div class="cell" style="left:935px;top:231px">03:12:44</div>
</div>
<div class="pt" style="left:306px;top:686px;width:997px;height:22px;line-height:23px;padding-left:3px">Szczegoly urzadzen</div>
<div class="abs" style="left:1272px;top:689px;width:11px;height:11px;background:#fff"></div><div class="abs" style="left:1274px;top:696px;width:7px;height:2px;background:#33339a"></div>
<div class="abs" style="left:1288px;top:689px;width:11px;height:11px;background:#fff"></div><div class="abs" style="left:1290px;top:691px;width:7px;height:7px;border:1px solid #33339a;border-top-width:2px"></div>
<div class="abs" style="left:1287px;top:708px;width:16px;height:227px;background:#f1f1f1"></div>
<div class="abs" style="left:1290px;top:753px;width:12px;height:22px;background:#c1c1c1"></div>
<svg class="abs" style="left:1288px;top:708px" width="16" height="227"><path d="M4 12l4-4.500 4 4.500z" fill="#404040"/><path d="M4 214.500l4 4.500 4-4.500z" fill="#404040"/></svg>
<div class="abs" style="left:1350px;top:777px;width:562px;height:152px;background:#fff;border:1px solid #3f68ad"></div>
<div class="abs tah" style="left:1351px;top:802px;width:544px;height:126px;overflow:hidden;letter-spacing:-0.12px">
<div class="ac" style="left:3px;top:-11px">GD</div>
<div class="ac" style="left:104px;top:-11px">70180</div>
<div class="ac" style="left:172px;top:-20px">Przekroczenie</div>
<div class="ac" style="left:172px;top:-2px">predkosci</div>
<div class="ac" style="left:284px;top:-20px">2020/01/27</div>
<div class="ac" style="left:284px;top:-2px">09:17</div>
<div class="ac" style="left:369px;top:-11px">2020/01/27 09:17&nbsp; AK&nbsp; Wyczysc</div>
<div class="ac" style="left:3px;top:27px">GD</div>
<div class="ac" style="left:104px;top:27px">70180</div>
<div class="ac" style="left:172px;top:18px">Przekroczenie</div>
<div class="ac" style="left:172px;top:36px">predkosci</div>
<div class="ac" style="left:284px;top:18px">2020/01/27</div>
<div class="ac" style="left:284px;top:36px">09:13</div>
<div class="ac" style="left:369px;top:27px">2020/01/27 09:13&nbsp; AK&nbsp; Wyczysc</div>
<div class="ac" style="left:3px;top:65px">GD</div>
<div class="ac" style="left:104px;top:65px">70180</div>
<div class="ac" style="left:172px;top:56px">Przekroczenie</div>
<div class="ac" style="left:172px;top:74px">predkosci</div>
<div class="ac" style="left:284px;top:56px">2020/01/27</div>
<div class="ac" style="left:284px;top:74px">09:05</div>
<div class="ac" style="left:369px;top:65px">2020/01/27 09:05&nbsp; AK&nbsp; Wyczysc</div>
<div class="ac" style="left:3px;top:103px">GD</div>
<div class="ac" style="left:104px;top:103px">70180</div>
<div class="ac" style="left:172px;top:94px">Przekroczenie</div>
<div class="ac" style="left:172px;top:112px">predkosci</div>
<div class="ac" style="left:284px;top:94px">2020/01/27</div>
<div class="ac" style="left:284px;top:112px">09:01</div>
<div class="ac" style="left:369px;top:103px">2020/01/27 09:01&nbsp; AK&nbsp; Wyczysc</div>
</div>
<div class="pt tah" style="left:1352px;top:779px;width:558px;height:22px;line-height:25px;padding-left:2px;font-size:11.600px;letter-spacing:0.15px">Przeglad alarmow<span style="position:absolute;left:131px;font-size:12px;font-family:Liberation Sans,sans-serif;letter-spacing:-0.43px">Wlacz dźwięk alarmu 13s</span></div>
<div class="abs" style="left:1467px;top:782px;width:11px;height:12px;border:1px solid #8a8a8a;border-radius:2px;background:#f0f0f0"></div>
<svg class="abs" style="left:1466.500px;top:782px" width="12" height="12"><path d="M2.8 6.2l2.200 2.300 4.200-5.300" fill="none" stroke="#222" stroke-width="1.8"/></svg>
<div class="abs" style="left:1879px;top:783px;width:11px;height:11px;background:#fff"></div><div class="abs" style="left:1881px;top:790px;width:7px;height:2px;background:#33339a"></div>
<div class="abs" style="left:1895px;top:783px;width:11px;height:11px;background:#fff"></div><div class="abs" style="left:1897px;top:785px;width:7px;height:7px;border:1px solid #33339a;border-top-width:2px"></div>
<div class="abs" style="left:1894px;top:802px;width:17px;height:126px;background:#f1f1f1"></div>
<div class="abs" style="left:1896px;top:826px;width:13px;height:18px;background:#c1c1c1"></div>
<svg class="abs" style="left:1894px;top:802px" width="17" height="126"><path d="M4.500 11.500l4-4.500 4 4.500z" fill="#505050"/><path d="M4.500 112.500l4 4.500 4-4.500z" fill="#505050"/></svg>
</div></body></html>
